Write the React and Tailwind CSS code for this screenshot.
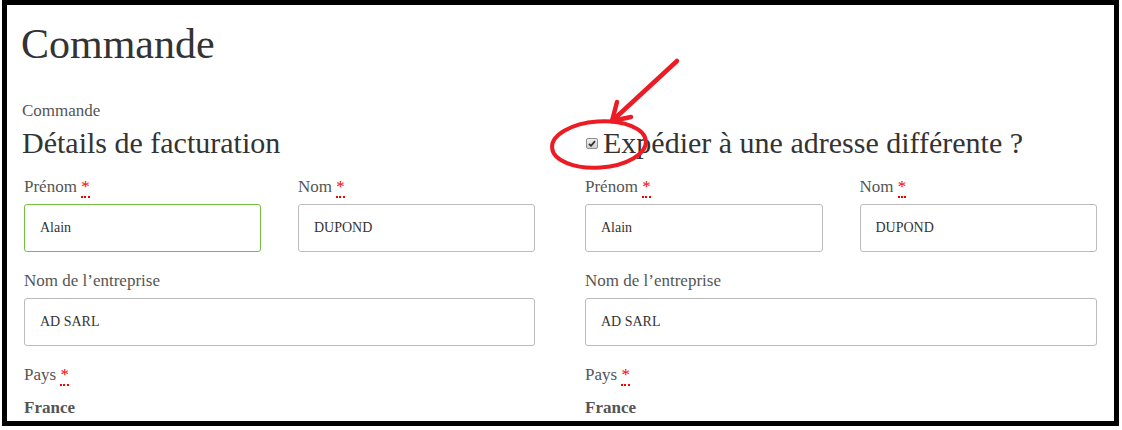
import React from 'react';

function Req() {
    return (
        <abbr title="obligatoire" className="text-[#ff0000] no-underline border-b-2 border-dotted border-[#ff0000] leading-none">
            *
        </abbr>
    );
}

function Field({ label, required, value, focused }) {
    return (
        <div className="flex flex-col">
            <label className="text-[17px] leading-[20px] text-[#555]">
                {label} {required && <Req />}
            </label>
            <input
                readOnly
                value={value}
                className={`mt-[7px] h-[48px] w-full rounded-[3px] border bg-white px-[15px] text-[14px] text-[#333] outline-none font-['Liberation_Serif',serif] ${
                    focused ? 'border-[#74c043]' : 'border-[#bbb]'
                }`}
            />
        </div>
    );
}

function Column({ heading, focusFirst }) {
    return (
        <div className="flex flex-col">
            {heading}
            <div className="mt-[17px] grid grid-cols-2 gap-x-[37px]">
                <Field label="Prénom" required value="Alain" focused={focusFirst} />
                <Field label="Nom" required value="DUPOND" />
            </div>
            <div className="mt-[19px]">
                <Field label="Nom de l’entreprise" value="AD SARL" />
            </div>
            <div className="mt-[19px] flex flex-col">
                <span className="text-[17px] leading-[20px] text-[#555]">
                    Pays <Req />
                </span>
                <strong className="mt-[13px] text-[17px] leading-[20px] font-bold text-[#555]">France</strong>
            </div>
        </div>
    );
}

export default function App() {
    return (
        <div className="relative w-[1122px] h-[430px] bg-white overflow-hidden font-['Liberation_Serif',serif]">
            <div className="ml-[2px] w-[1117px] h-[426px] border-[5px] border-black overflow-hidden pl-[17px] pr-[17px] pt-[14px]">
                <h1 className="-ml-[3px] text-[42px] leading-[50px] font-normal text-[#333]">Commande</h1>
                <p className="-ml-[2px] mt-[32px] text-[17px] leading-[20px] text-[#555]">Commande</p>
                <div className="mt-[5px] grid grid-cols-[511px_512px] gap-x-[50px]">
                    <Column
                        focusFirst
                        heading={
                            <h3 className="-ml-[2px] text-[30px] leading-[34px] font-normal text-[#333]">
                                Détails de facturation
                            </h3>
                        }
                    />
                    <Column
                        heading={
                            <h3 className="ml-[1px] flex items-center gap-[5px] text-[30px] leading-[34px] font-normal text-[#333]">
                                <span className="flex h-[11px] w-[12px] items-center justify-center rounded-[2px] border border-[#8e8e8e] bg-gradient-to-b from-[#f0f0f0] to-[#cfcfcf]">
                                    <svg width="8" height="7" viewBox="0 0 8 7">
                                        <path d="M1 3.8 L3 5.8 L7 1.2" fill="none" stroke="#333" strokeWidth="1.8" />
                                    </svg>
                                </span>
                                <span>Expédier à une adresse différente ?</span>
                            </h3>
                        }
                    />
                </div>
            </div>

            {/* annotation rouge */}
            <svg className="pointer-events-none absolute inset-0" width="1122" height="430">
                <ellipse cx="599" cy="144.5" rx="47" ry="23" transform="rotate(-4 599 144.5)" fill="none" stroke="#ec1c24" strokeWidth="4" />
                <g stroke="#ec1c24" strokeWidth="4.5" strokeLinecap="round" fill="none">
                    <line x1="677" y1="61" x2="612" y2="121" />
                    <line x1="612" y1="121" x2="617" y2="102" />
                    <line x1="612" y1="121" x2="631" y2="117" />
                </g>
            </svg>
        </div>
    );
}
